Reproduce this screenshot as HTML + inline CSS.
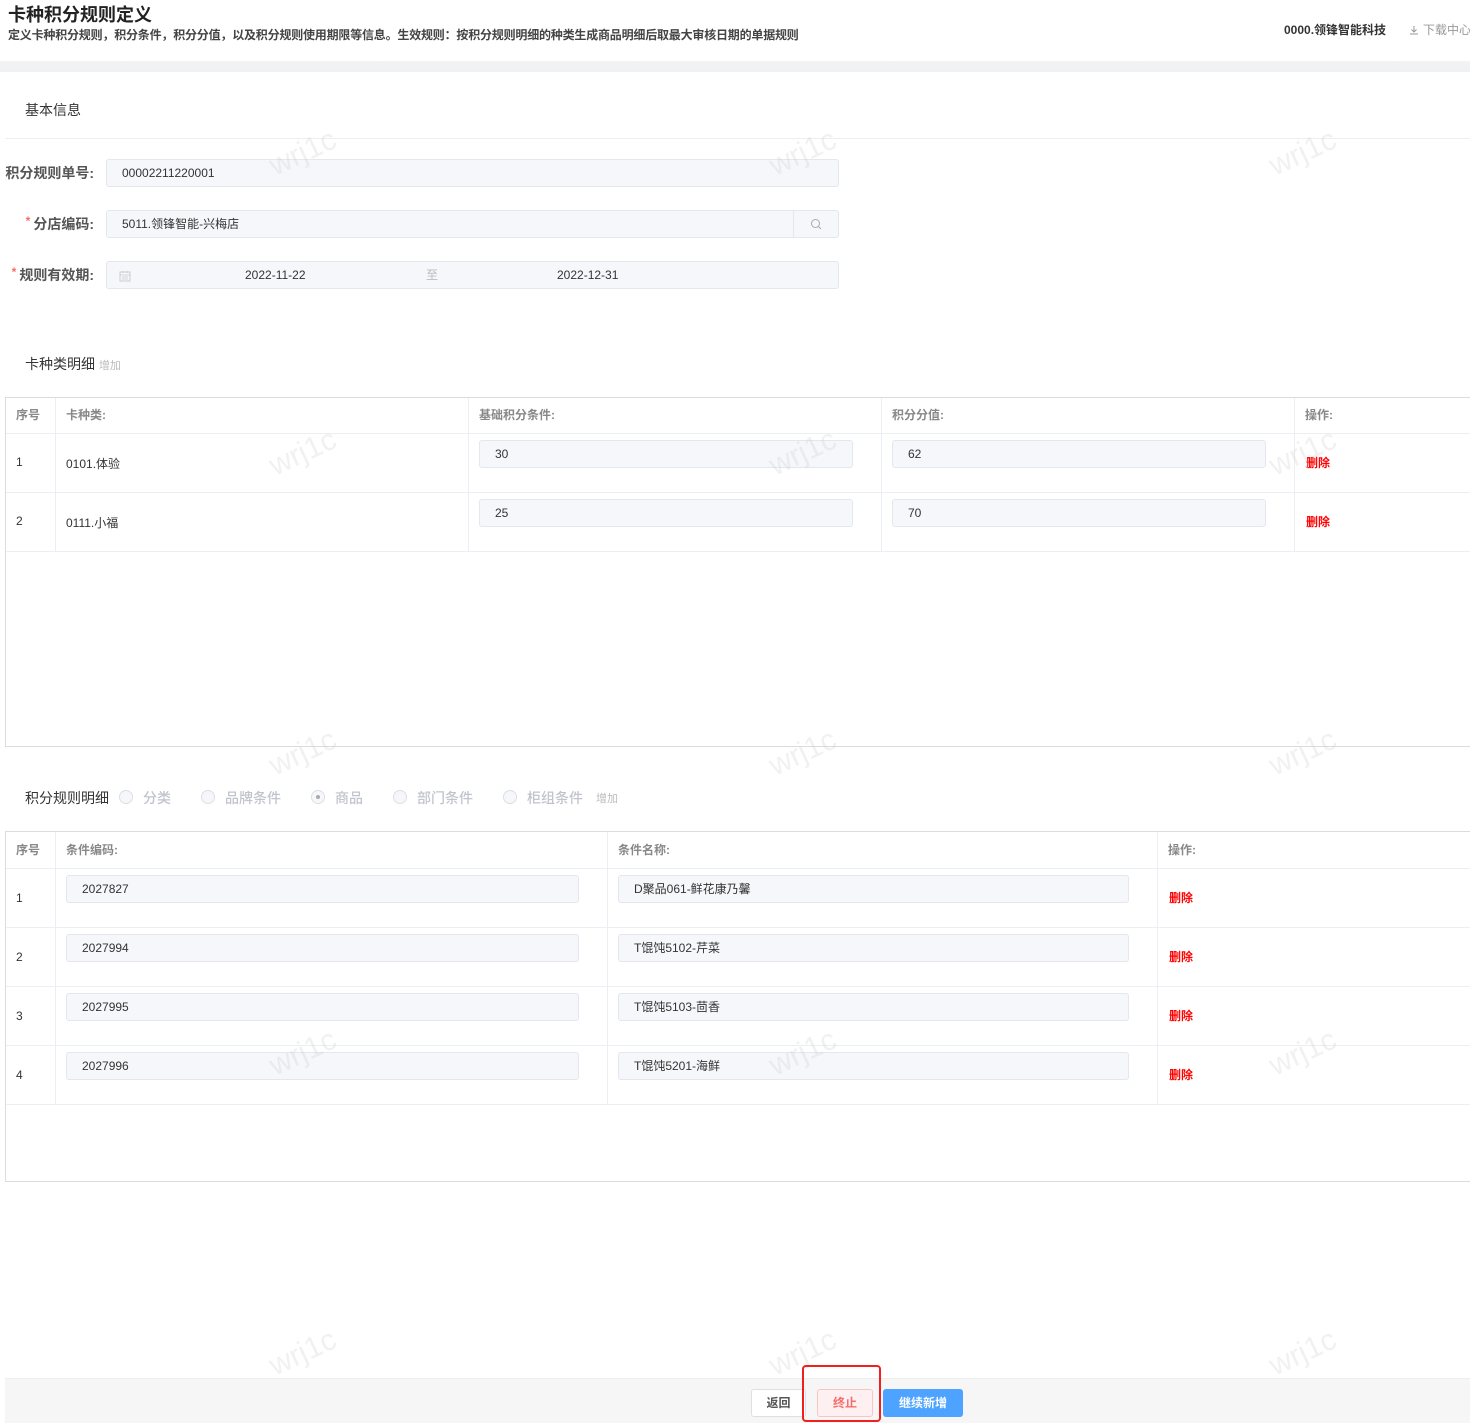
<!DOCTYPE html>
<html><head><meta charset="utf-8">
<style>
*{margin:0;padding:0;box-sizing:border-box}
body{width:1470px;height:1423px;position:relative;background:#fff;overflow:hidden;font-family:"Liberation Sans","Noto Sans CJK SC",sans-serif;color:#333;font-size:12px}
.a{position:absolute;white-space:nowrap}
.inp{position:absolute;background:#f5f7fa;border:1px solid #e4e7ed;border-radius:3px;height:28px;line-height:26px;padding-left:15px;color:#333;font-size:12px}
.lbl{position:absolute;font-size:14px;font-weight:bold;color:#555;text-align:right;width:94px;left:0}
.star{color:#f56c6c;font-size:12px;margin-right:3px;vertical-align:top}
.hl{position:absolute;background:#ebeef5}
.vl{position:absolute;background:#ebeef5;width:1px}
.th{position:absolute;font-weight:bold;color:#888;font-size:12px}
.del{position:absolute;color:#f00;font-size:12px;font-weight:bold}
.wm{position:absolute;color:rgba(200,200,200,0.25);font-size:30px;transform:rotate(-25deg);font-family:"Liberation Sans",sans-serif;z-index:5}
.radio{position:absolute;width:14px;height:14px;border:1px solid #dcdfe6;border-radius:50%;background:#f5f7fa;top:790px}
.rl{position:absolute;color:#c0c4cc;font-size:14px;top:788px;font-weight:500}
</style></head><body>
<div class="wm" style="left:268px;top:136px">wrj1c</div>
<div class="wm" style="left:768px;top:136px">wrj1c</div>
<div class="wm" style="left:1268px;top:136px">wrj1c</div>
<div class="wm" style="left:268px;top:436px">wrj1c</div>
<div class="wm" style="left:768px;top:436px">wrj1c</div>
<div class="wm" style="left:1268px;top:436px">wrj1c</div>
<div class="wm" style="left:268px;top:736px">wrj1c</div>
<div class="wm" style="left:768px;top:736px">wrj1c</div>
<div class="wm" style="left:1268px;top:736px">wrj1c</div>
<div class="wm" style="left:268px;top:1036px">wrj1c</div>
<div class="wm" style="left:768px;top:1036px">wrj1c</div>
<div class="wm" style="left:1268px;top:1036px">wrj1c</div>
<div class="wm" style="left:268px;top:1336px">wrj1c</div>
<div class="wm" style="left:768px;top:1336px">wrj1c</div>
<div class="wm" style="left:1268px;top:1336px">wrj1c</div>

<div class="a" style="left:8px;top:1px;font-size:18px;font-weight:bold;color:#222">卡种积分规则定义</div>
<div class="a" style="left:8px;top:26px;font-size:12px;font-weight:bold;color:#444;letter-spacing:-0.2px">定义卡种积分规则，积分条件，积分分值，以及积分规则使用期限等信息。生效规则：按积分规则明细的种类生成商品明细后取最大审核日期的单据规则</div>
<div class="a" style="left:1284px;top:21px;font-size:12px;font-weight:bold;color:#333">0000.领锋智能科技</div>
<div class="a" style="left:1409px;top:21px;font-size:12px;color:#999"><svg width="10" height="10" viewBox="0 0 10 10" style="vertical-align:-1px;margin-right:4px"><path d="M5 1v6M2.5 4.5L5 7l2.5-2.5M1 9h8" stroke="#999" fill="none" stroke-width="1"/></svg>下载中心</div>
<div class="a" style="left:0;top:61px;width:1470px;height:11px;background:linear-gradient(#f3f3f3,#f0f1f3)"></div>

<div class="a" style="left:25px;top:100px;font-size:14px;color:#333">基本信息</div>
<div class="hl" style="left:5px;top:138px;width:1465px;height:1px"></div>

<div class="lbl" style="top:163px">积分规则单号:</div>
<div class="inp" style="left:106px;top:159px;width:733px">00002211220001</div>
<div class="lbl" style="top:214px"><span class="star">*</span>分店编码:</div>
<div class="inp" style="left:106px;top:210px;width:733px">5011.领锋智能-兴梅店
<div style="position:absolute;right:0;top:0;width:45px;height:26px;border-left:1px solid #e4e7ed"><svg width="12" height="12" viewBox="0 0 12 12" style="position:absolute;left:16px;top:7px"><circle cx="5.5" cy="5.5" r="4" stroke="#aaa" fill="none"/><path d="M8.5 8.5L11 11" stroke="#aaa"/></svg></div></div>
<div class="lbl" style="top:265px"><span class="star">*</span>规则有效期:</div>
<div class="inp" style="left:106px;top:261px;width:733px;padding-left:0">
<svg width="12" height="12" viewBox="0 0 12 12" style="position:absolute;left:12px;top:8px"><rect x="1" y="2" width="10" height="9" stroke="#ccc" fill="none"/><path d="M1 5h10M3 7h6M3 9h6M4 1v2M8 1v2" stroke="#ccc" stroke-width=".8"/></svg>
<span class="a" style="left:138px;top:0">2022-11-22</span><span class="a" style="left:319px;top:0;color:#bbb">至</span><span class="a" style="left:450px;top:0">2022-12-31</span></div>

<div class="a" style="left:25px;top:354px;font-size:14px;color:#333">卡种类明细 <span style="font-size:11px;color:#bbb">增加</span></div>

<!-- table 1 -->
<div class="a" style="left:5px;top:397px;width:1470px;height:350px;border:1px solid #dcdcdc;border-right:none"></div>
<div class="hl" style="left:6px;top:433px;width:1464px;height:1px"></div>
<div class="hl" style="left:6px;top:492px;width:1464px;height:1px"></div>
<div class="hl" style="left:6px;top:551px;width:1464px;height:1px"></div>
<div class="vl" style="left:55px;top:398px;height:153px"></div>
<div class="vl" style="left:468px;top:398px;height:153px"></div>
<div class="vl" style="left:881px;top:398px;height:153px"></div>
<div class="vl" style="left:1294px;top:398px;height:153px"></div>
<div class="th" style="left:16px;top:406px">序号</div>
<div class="th" style="left:66px;top:406px">卡种类:</div>
<div class="th" style="left:479px;top:406px">基础积分条件:</div>
<div class="th" style="left:892px;top:406px">积分分值:</div>
<div class="th" style="left:1305px;top:406px">操作:</div>
<div class="a" style="left:16px;top:455px">1</div>
<div class="a" style="left:66px;top:455px">0101.体验</div>
<div class="inp" style="left:479px;top:440px;width:374px">30</div>
<div class="inp" style="left:892px;top:440px;width:374px">62</div>
<div class="del" style="left:1306px;top:454px">删除</div>
<div class="a" style="left:16px;top:514px">2</div>
<div class="a" style="left:66px;top:514px">0111.小福</div>
<div class="inp" style="left:479px;top:499px;width:374px">25</div>
<div class="inp" style="left:892px;top:499px;width:374px">70</div>
<div class="del" style="left:1306px;top:513px">删除</div>

<div class="a" style="left:25px;top:788px;font-size:14px;color:#333">积分规则明细</div>
<div class="radio" style="left:119px"></div><div class="rl" style="left:143px">分类</div>
<div class="radio" style="left:201px"></div><div class="rl" style="left:225px">品牌条件</div>
<div class="radio" style="left:311px"><span style="position:absolute;left:4px;top:4px;width:4px;height:4px;border-radius:50%;background:#aaa"></span></div><div class="rl" style="left:335px">商品</div>
<div class="radio" style="left:393px"></div><div class="rl" style="left:417px">部门条件</div>
<div class="radio" style="left:503px"></div><div class="rl" style="left:527px">柜组条件</div>
<div class="a" style="left:596px;top:790px;font-size:11px;color:#bbb">增加</div>

<!-- table 2 -->
<div class="a" style="left:5px;top:831px;width:1470px;height:351px;border:1px solid #dcdcdc;border-right:none"></div>
<div class="hl" style="left:6px;top:868px;width:1464px;height:1px"></div>
<div class="hl" style="left:6px;top:927px;width:1464px;height:1px"></div>
<div class="hl" style="left:6px;top:986px;width:1464px;height:1px"></div>
<div class="hl" style="left:6px;top:1045px;width:1464px;height:1px"></div>
<div class="hl" style="left:6px;top:1104px;width:1464px;height:1px"></div>
<div class="vl" style="left:55px;top:832px;height:272px"></div>
<div class="vl" style="left:607px;top:832px;height:272px"></div>
<div class="vl" style="left:1157px;top:832px;height:272px"></div>
<div class="th" style="left:16px;top:841px">序号</div>
<div class="th" style="left:66px;top:841px">条件编码:</div>
<div class="th" style="left:618px;top:841px">条件名称:</div>
<div class="th" style="left:1168px;top:841px">操作:</div>

<div class="a" style="left:16px;top:891px">1</div>
<div class="inp" style="left:66px;top:875px;width:513px">2027827</div>
<div class="inp" style="left:618px;top:875px;width:511px">D聚品061-鲜花康乃馨</div>
<div class="del" style="left:1169px;top:889px">删除</div>
<div class="a" style="left:16px;top:950px">2</div>
<div class="inp" style="left:66px;top:934px;width:513px">2027994</div>
<div class="inp" style="left:618px;top:934px;width:511px">T馄饨5102-芹菜</div>
<div class="del" style="left:1169px;top:948px">删除</div>
<div class="a" style="left:16px;top:1009px">3</div>
<div class="inp" style="left:66px;top:993px;width:513px">2027995</div>
<div class="inp" style="left:618px;top:993px;width:511px">T馄饨5103-茴香</div>
<div class="del" style="left:1169px;top:1007px">删除</div>
<div class="a" style="left:16px;top:1068px">4</div>
<div class="inp" style="left:66px;top:1052px;width:513px">2027996</div>
<div class="inp" style="left:618px;top:1052px;width:511px">T馄饨5201-海鲜</div>
<div class="del" style="left:1169px;top:1066px">删除</div>

<!-- footer -->
<div class="a" style="left:5px;top:1378px;width:1465px;height:45px;background:#f6f6f6;border-top:1px solid #eee"></div>
<div class="a" style="left:751px;top:1389px;width:55px;height:28px;background:#fff;border:1px solid #dcdfe6;border-radius:3px;text-align:center;line-height:26px;font-weight:bold;color:#555">返回</div>
<div class="a" style="left:817px;top:1389px;width:56px;height:28px;background:#fef0f0;border:1px solid #fbc4c4;border-radius:3px;text-align:center;line-height:26px;font-weight:bold;color:#f56c6c">终止</div>
<div class="a" style="left:883px;top:1389px;width:80px;height:28px;background:#4da3ff;border-radius:3px;text-align:center;line-height:28px;font-weight:bold;color:#fff">继续新增</div>
<div class="a" style="left:802px;top:1365px;width:79px;height:57px;border:2px solid #f02020;border-radius:4px;z-index:6"></div>
</body></html>
